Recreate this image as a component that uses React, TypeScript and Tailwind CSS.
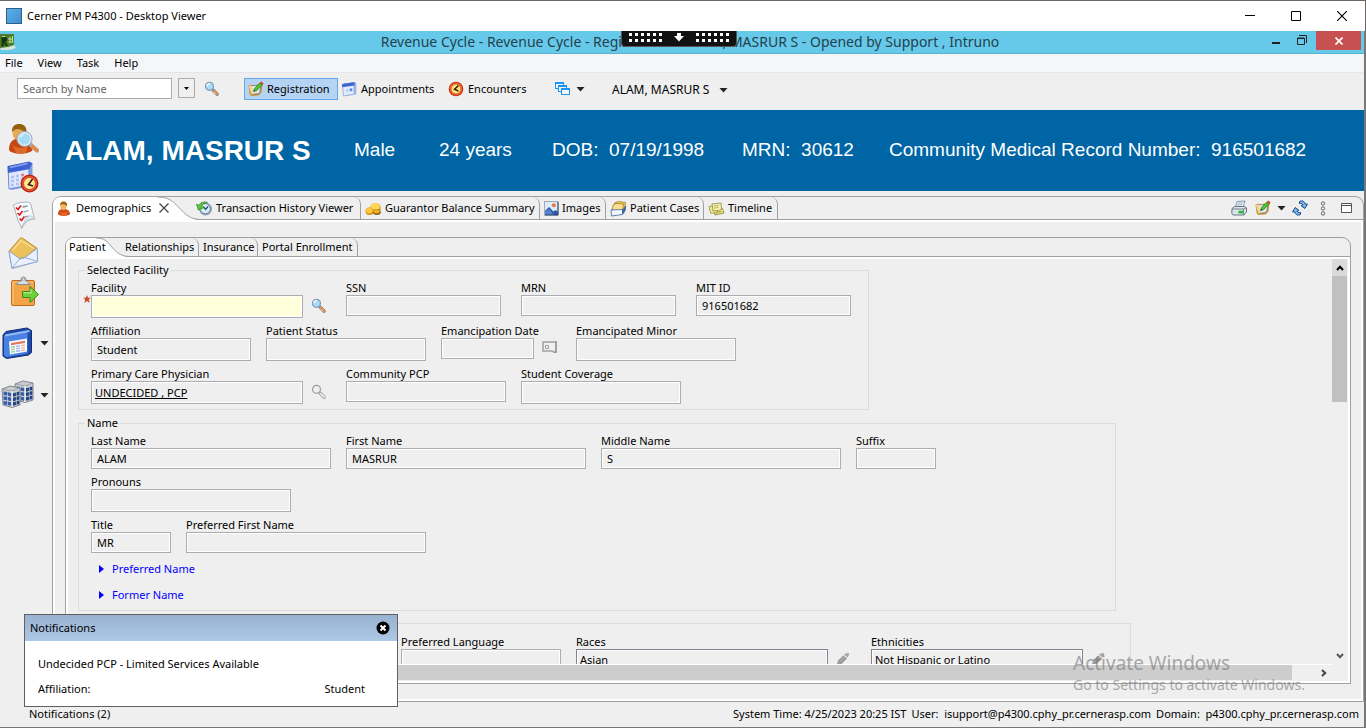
import React from "react";

/* ---------- small shared drawings ---------- */

function Caret({ className = "" }: { className?: string }) {
  return (
    <svg width="9" height="5" viewBox="0 0 9 5" className={className} aria-hidden="true">
      <path d="M0.5 0h8L4.5 4.6z" fill="#222" />
    </svg>
  );
}

function Magnifier({ muted = false }: { muted?: boolean }) {
  return (
    <svg width="16" height="16" viewBox="0 0 16 16" aria-hidden="true">
      <path d="M9 9l4.200 4.200" stroke={muted ? "#a0a0a0" : "#8a8f98"} strokeWidth="3.400" strokeLinecap="round" />
      <path d="M9.600 9.600l3.600 3.600" stroke={muted ? "#efefef" : "#f28a3c"} strokeWidth="1.800" strokeLinecap="round" />
      {!muted && <path d="M9.800 10.800l2.400 2.400" stroke="#ffe0b0" strokeWidth="0.8" />}
      <circle cx="5.500" cy="5.300" r="4" fill={muted ? "#efefef" : "#a9dbfb"} stroke={muted ? "#a0a0a0" : "#7d9cb8"} strokeWidth="1.200" />
      {!muted && <path d="M3 5.200a2.800 2.800 0 0 1 2.800-2.600" stroke="#fff" strokeWidth="1.400" fill="none" />}
    </svg>
  );
}

function EditPad() {
  return (
    <svg width="16" height="16" viewBox="0 0 16 16" className="shrink-0" aria-hidden="true">
      <path d="M.5 4.500l3-1 1 1 10-1.500-1 8.500-3 3-7.500.5L1.500 13z" fill="#c9963f" />
      <path d="M2.500 5l10.500-1-1.500 8.500-7.500.8z" fill="#dbe8fa" stroke="#8a7440" strokeWidth=".7" />
      <path d="M.8 5l2.600 8.500 2.400-.4L3.600 4.600z" fill="#f3d68a" />
      <path d="M5.500 10.500l1-3L12 1.800l2.300 2L8.600 9.700z" fill="#4fc22f" stroke="#2a7a1c" strokeWidth=".7" />
      <path d="M12 1.800L13.400.5l2.200 2-1.300 1.400z" fill="#e0392b" />
      <path d="M5.500 10.500l1-1.500.8.800z" fill="#222" />
    </svg>
  );
}

function CalendarSmall() {
  return (
    <svg width="16" height="16" viewBox="0 0 16 16" className="shrink-0" aria-hidden="true">
      <path d="M3 2.500L14 1l1.300 1v11.500L3.500 15z" fill="#9fb4e8" />
      <path d="M1.500 3.500L13 1.800v11.400L2.500 15z" fill="#e6edff" stroke="#8da5dd" strokeWidth=".8" />
      <path d="M1 3L13.500 1.200v3.400L1.300 6.200z" fill="#3c66d0" />
      <path d="M5 8.200l2.600-.3v2.600L5 10.800z" fill="#b9cbf3" />
      <path d="M8.700 7.600l2.600-.4v2.800l-2.600.4z" fill="#5f86e2" />
      <path d="M5 12l2.600-.3v1.500L5 13.500z" fill="#d5e0fa" />
    </svg>
  );
}

function ClockRed() {
  return (
    <svg width="16" height="16" viewBox="0 0 16 16" className="shrink-0" aria-hidden="true">
      <circle cx="8" cy="8" r="7.300" fill="#c8351c" />
      <circle cx="8" cy="8" r="6.200" fill="#f0672e" />
      <circle cx="8" cy="8" r="4.900" fill="#ffe27a" stroke="#b5351c" strokeWidth=".6" />
      <path d="M10.500 4.500L6.500 8.200l4 2" stroke="#3a1a08" strokeWidth="1.500" fill="none" />
    </svg>
  );
}

function Windows() {
  return (
    <svg width="15" height="14" viewBox="0 0 15 14" className="shrink-0" aria-hidden="true">
      {[[0.5, 0.5], [3.5, 3.5], [6.5, 6.5]].map(([x, y]) => (
        <g key={x}>
          <rect x={x} y={y} width="8" height="6" fill="#f4f8fc" stroke="#1a94ee" />
          <rect x={x} y={y} width="8" height="1.500" fill="#1a94ee" />
        </g>
      ))}
    </svg>
  );
}

function PersonSmall() {
  return (
    <svg width="14" height="16" viewBox="0 0 14 16" aria-hidden="true">
      <path d="M1 13c0-3 1.500-4.800 4-5h3c3 .2 5 2 5 5 0 2-12 2.600-12 0z" fill="#cf4a14" />
      <path d="M3 10c2 2 5 2.300 8 0l-2 5H5z" fill="#e4672a" />
      <ellipse cx="6.500" cy="5" rx="3.200" ry="4" fill="#f0b862" />
      <path d="M3.200 5C2.800 1.500 5 .4 7 .6c2.500.2 3.500 2 2.900 4.600C9 3.200 6 3.500 5 3c-.6.500-1.200 1-1.800 2z" fill="#9b6414" />
    </svg>
  );
}

function HistoryClock() {
  return (
    <svg width="17" height="16" viewBox="0 0 17 16" className="shrink-0" aria-hidden="true">
      <circle cx="9.500" cy="8" r="6.500" fill="#8fa3b3" />
      <circle cx="9.300" cy="7.700" r="5" fill="#d6effa" stroke="#60798c" strokeWidth=".8" />
      <path d="M7.500 5.500l2 3 2.600-3" stroke="#24485c" strokeWidth="1.300" fill="none" />
      <path d="M0.500 3.200l2.200 1C4.500 1.500 8 .2 11.500 1.500 8.500 1.700 6.500 3 5.500 5.500L8 6.700 2.300 9z" fill="#5cc540" stroke="#2f8a24" strokeWidth=".7" />
    </svg>
  );
}

function Coins() {
  return (
    <svg width="17" height="16" viewBox="0 0 17 16" className="shrink-0" aria-hidden="true">
      <ellipse cx="10.500" cy="7" rx="5.300" ry="4.800" fill="#e79c12" />
      <ellipse cx="10" cy="5.800" rx="4.600" ry="3.800" fill="#ffd75a" />
      <ellipse cx="4.600" cy="10.300" rx="4" ry="3.700" fill="#d98c0c" />
      <ellipse cx="4.400" cy="9.600" rx="3.300" ry="2.800" fill="#ffc93c" />
      <ellipse cx="11.800" cy="11" rx="4" ry="3" fill="#8f5e14" />
      <ellipse cx="11.500" cy="10.200" rx="3.200" ry="2" fill="#efb028" />
    </svg>
  );
}

function PictureIcon() {
  return (
    <svg width="15" height="15" viewBox="0 0 15 15" className="shrink-0" aria-hidden="true">
      <rect x=".5" y=".5" width="13.500" height="13.500" fill="#dceafd" stroke="#a3a8b3" />
      <path d="M1 14V10l4-4 4.500 4.500L11.500 9l2.500 2v3z" fill="#2d59a8" />
      <path d="M1 14v-3l4-3 5 6z" fill="#5484cf" />
      <circle cx="9.800" cy="4.200" r="2" fill="#f2793c" />
      <path d="M1 14h13V1" stroke="#28406f" fill="none" />
    </svg>
  );
}

function CaseBox() {
  return (
    <svg width="17" height="16" viewBox="0 0 17 16" className="shrink-0" aria-hidden="true">
      <path d="M1 9l3-4 11-1 1.300 2-2.300 7-12 2z" fill="#7ea0c8" />
      <path d="M4.500 2l4-1.500L15.500 1.500l-1 7H4z" fill="#f1c65a" stroke="#9a7424" strokeWidth=".7" />
      <path d="M3 4l3-1.500 7.500.5-1 6.500H2.500z" fill="#fbdf90" stroke="#9a7424" strokeWidth=".7" />
      <path d="M1 9l11.500-.5v5L1.500 15z" fill="#f4f8fd" stroke="#41669c" strokeWidth=".8" />
      <path d="M12.500 8.500l3.500-4-.5 5-3 4z" fill="#3f6397" />
    </svg>
  );
}

function Notes() {
  return (
    <svg width="17" height="16" viewBox="0 0 17 16" className="shrink-0" aria-hidden="true">
      <path d="M5 8.500l9.500-1 1.500 4.500-9 2z" fill="#e7df7c" stroke="#87813a" strokeWidth=".8" />
      <path d="M4 3l9-1 .5 6-3 2-6 .3z" fill="#faf5ae" stroke="#8d8740" strokeWidth=".8" />
      <path d="M1 5.500L4.500 5l.5 5 5-.4-1.500 2.200-6 .4z" fill="#efe88d" stroke="#8d8740" strokeWidth=".7" />
      <path d="M6 5l5-.5M6 7l4.500-.4M8 11.500l5.500-1" stroke="#a39c50" strokeWidth=".8" />
    </svg>
  );
}

function Printer() {
  return (
    <svg width="16" height="16" viewBox="0 0 16 16" aria-hidden="true">
      <path d="M4.500 7L6 1.500l8-.5-2 6.500z" fill="#f2f8fd" stroke="#7590a8" strokeWidth=".9" />
      <path d="M6.800 3.200l5-.3M6.200 5l5-.3" stroke="#7ba0bd" strokeWidth=".8" />
      <path d="M1 8.500L3.500 6.500h10l2 1.500v4L13 15H2L.8 13.500z" fill="#dce4e9" stroke="#5a6a75" strokeWidth=".9" />
      <path d="M1 9h11.500l2.800-1.300M12.500 9v5.500" stroke="#5a6a75" strokeWidth=".8" fill="none" />
      <rect x="7.500" y="10.800" width="4.300" height="2.600" fill="#12c020" />
    </svg>
  );
}

function Refresh() {
  return (
    <svg width="16" height="16" viewBox="0 0 16 16" aria-hidden="true" fill="#86b8ee" stroke="#12458c" strokeWidth="1" strokeLinejoin="round">
      <path d="M7.500 1.500C10 .2 12.500 1 13.300 4.200L15.400 4l-2.600 4.500L9 5.500l2-.5C10.500 3.400 9.400 3 7.500 3.600z" />
      <path d="M8.500 14.500C6 15.800 3.500 15 2.700 11.800L.6 12l2.600-4.500L7 10.500l-2 .5c.5 1.600 1.600 2 3.500 1.400z" />
    </svg>
  );
}

function Pencil() {
  return (
    <svg width="14" height="14" viewBox="0 0 14 14" aria-hidden="true">
      <path d="M.8 13L2 8.500 7.500 3.200l3.800 3L5.500 12z" fill="#9a9a9a" />
      <path d="M8 2.800L10 1.200 13 1l-.3 2.700-1.200 1.800z" fill="#a8a8a8" />
      <path d="M7.500 3.200l3.800 3" stroke="#efefef" strokeWidth=".8" />
      <path d="M3.500 9.800L8.500 5" stroke="#b9b9b9" strokeWidth=".9" />
    </svg>
  );
}

/* ---------- sidebar drawings ---------- */

function PersonSearch() {
  return (
    <svg width="32" height="32" viewBox="0 0 32 32" aria-hidden="true">
      <path d="M2 27c0-7 3-10.500 8-11.500h7c6 1 8 5 8.500 11.500C22 32 5 32 2 27z" fill="#c84611" />
      <path d="M5 21c4 5 11 5 16 1l-2 8H9z" fill="#dd6a2a" />
      <ellipse cx="12" cy="9.500" rx="6.500" ry="8" fill="#eaa952" />
      <path d="M5 9C4.500 2.500 9 .5 13 1c5 .5 7.500 4 6 10-1.500-4.500-6-4-9-5-2 .5-4 1.500-5 3z" fill="#93600f" />
      <path d="M24 22l6 5.500" stroke="#a2aab2" strokeWidth="4.400" strokeLinecap="round" />
      <path d="M25.500 23.500l4.300 4" stroke="#f58233" strokeWidth="2.800" strokeLinecap="round" />
      <circle cx="17.500" cy="16" r="6.600" fill="#a4daf5" stroke="#dfe7ee" strokeWidth="2" />
      <circle cx="17.500" cy="16" r="7.600" fill="none" stroke="#7e98ac" strokeWidth=".8" />
      <path d="M13 15c.5-3 3-4 5-3.800-2 1-3.200 2.300-5 3.800z" fill="#fff" />
    </svg>
  );
}

function CalendarClock() {
  return (
    <svg width="32" height="32" viewBox="0 0 32 32" aria-hidden="true">
      <path d="M1 6L22 1l3.500 2v22L4 29l-2-2z" fill="#7f9ce2" />
      <path d="M1 6L22 1.500V24L2 28z" fill="#dfe8ff" stroke="#6d8bd9" />
      <path d="M.6 5L22 .6l3.600 1.600-3.600 6L1 12z" fill="#3f62d2" />
      <path d="M3 6.500l17.500-4" stroke="#8aa6f0" strokeWidth="1.400" />
      {[0, 1, 2].map((r) => (
        <g key={r} fill="#afc3f2">
          <path d={`M4 ${15 + r * 4}l3-.6v2.600l-3 .6z`} />
          <path d={`M9 ${14 + r * 4}l3-.6v2.600l-3 .6z`} />
          <path d={`M14 ${13 + r * 4}l3-.6v2.600l-3 .6z`} fill={r === 0 ? "#ee7d7d" : "#afc3f2"} />
        </g>
      ))}
      <circle cx="22.500" cy="22.500" r="9" fill="#bd2410" />
      <circle cx="22.500" cy="22.500" r="7.500" fill="#ee5a34" />
      <circle cx="22.500" cy="22.500" r="6" fill="#ffe691" stroke="#bd2410" strokeWidth=".7" />
      <path d="M25.500 18l-4 5.500 4.500 1.500" stroke="#3b1c0c" strokeWidth="1.600" fill="none" />
    </svg>
  );
}

function Checklist() {
  return (
    <svg width="32" height="32" viewBox="0 0 32 32" aria-hidden="true">
      <path d="M6.500 6C10 4 14 3 20 3c2 0 3.500 1 4 3l3.500 14c-5 0-9 2-13 9.500-1-4-2-5-3.500-8z" fill="#f8fbfd" stroke="#a7b2bd" />
      <path d="M14.500 29.500c3-8 7-9.500 13-9.500-2-3-4-3.500-6-3-3 2-5 7-7 12.500z" fill="#dde8f0" stroke="#a7b2bd" strokeWidth=".6" />
      <path d="M15.500 8l5-1M16.500 13l5-1.500M18 18l3-1" stroke="#8494a3" strokeWidth="1.300" />
      <path d="M9 8.500l2 2 3-4M10.500 14l2 2 3-4M12.500 19.500l2 2 3-4" stroke="#e01d1d" strokeWidth="1.700" fill="none" />
    </svg>
  );
}

function Envelope() {
  return (
    <svg width="32" height="32" viewBox="0 0 32 32" aria-hidden="true">
      <path d="M2 14L15 4l15 7.500.6 13L5 31.500z" fill="#cdddf5" stroke="#8ea5c8" />
      <path d="M2.500 13.500L13 1.500c.8-.8 2-.8 3 0L29.500 11 18 21l-12 1z" fill="#ecc15c" stroke="#b98a2a" />
      <path d="M6 13L14 3.500l13 8" stroke="#f8df9d" strokeWidth="1.200" fill="none" />
      <path d="M2 14l11 8 5-1.500L30 11.500l.6 13L5 31z" fill="#e9f1fe" stroke="#8ea5c8" strokeWidth=".9" />
      <path d="M5 31l8-9.500 5-1 12.500 4" stroke="#8ea5c8" strokeWidth=".9" fill="none" />
    </svg>
  );
}

function ClipboardArrow() {
  return (
    <svg width="32" height="32" viewBox="0 0 32 32" aria-hidden="true">
      <rect x="4.500" y="5.500" width="23" height="25" rx="1.500" fill="#f3a348" stroke="#c16c1c" />
      <path d="M6 29V7h20" stroke="#ffca85" fill="none" />
      <path d="M9.500 9.500L12 6h2.500a2.500 2.500 0 1 1 4 0H20l3 3.500z" fill="#dcdfe3" stroke="#868b92" />
      <circle cx="16.500" cy="4" r="1.300" fill="#efefef" stroke="#868b92" strokeWidth=".7" />
      <path d="M15.500 16.500h7.500v-5l8.500 8-8.500 8v-5h-7.500z" fill="#6fd03c" stroke="#368c17" />
      <path d="M16.500 17.800h7.500v-3.500" stroke="#c2f2a0" fill="none" />
    </svg>
  );
}

function ScheduleBook() {
  return (
    <svg width="32" height="32" viewBox="0 0 32 32" aria-hidden="true">
      <path d="M1 8L4 4.500 25 1l4.500 2.500V25.500l-3 2.500L4.500 31.500 1 29z" fill="#1d49a8" stroke="#112d74" />
      <path d="M2 9L25.500 5V26.500L4.500 30.300 2 28z" fill="#4a82e2" />
      <path d="M3 8.500L27.500 4" stroke="#96bcf8" strokeWidth="1.800" />
      <path d="M7 14.500L25 11.500v13L8 27.500z" fill="#f7fbff" />
      <path d="M9 16l14-2.300v2.300L9 18.300z" fill="#e2775c" />
      <path d="M9 19.500l4-.6v6.300l-4 .6z" fill="#9ad497" />
      <path d="M14 18.700l4-.6v6.300l-4 .6z" fill="#a9b9ef" />
      <path d="M19 17.900l4-.6v6.300l-4 .6z" fill="#f1b8a6" />
      <path d="M8 21.700l16-2.600M8 24l16-2.600" stroke="#fff" strokeWidth=".9" />
    </svg>
  );
}

function Buildings() {
  const towers = [
    { x: 14, y: 2, k: "back" },
    { x: 1, y: 7, k: "front" },
  ];
  return (
    <svg width="33" height="32" viewBox="0 0 33 32" aria-hidden="true">
      {towers.map(({ x, y, k }) => (
        <g key={k} transform={`translate(${x} ${y})`}>
          <path d="M0 3L8 0l10 2v17l-8 2.500L1 19z" fill="#c9ccd0" stroke="#777d84" strokeWidth=".9" />
          <path d="M0 3l10 2 8-3" fill="none" stroke="#8f959b" strokeWidth=".8" />
          <path d="M10 5v16" stroke="#f8f8f8" strokeWidth="1.200" />
          {[0, 1, 2].map((r) => (
            <g key={r} fill="#355fa8">
              <path d={`M1.500 ${5.5 + r * 4.7}l3.600.6v3.500l-3.600-.6z`} />
              <path d={`M5.800 ${6.3 + r * 4.7}l3.400.6v3.500l-3.400-.6z`} />
              <path d={`M11 ${7.2 + r * 4.5}l2.900-.7v3.500l-2.900.7z`} fill="#1f4284" />
              <path d={`M14.600 ${6.2 + r * 4.5}l2.700-.7v3.500l-2.700.7z`} fill="#1f4284" />
            </g>
          ))}
        </g>
      ))}
    </svg>
  );
}

/* ---------- form parts ---------- */

type FieldProps = {
  id: string;
  label: string;
  value?: string;
  width: string;
  tall?: boolean;
  required?: boolean;
  tone?: string;
  text?: string;
};

function Field({ id, label, value = "", width, tall = false, required = false, tone = "border-[#abadb3]", text = "pl-[5px]" }: FieldProps) {
  return (
    <div className={`relative shrink-0 ${width}`}>
      <label htmlFor={id} className="block h-[14px] whitespace-nowrap leading-[14px]">
        {label}
      </label>
      {required && (
        <svg className="absolute -left-2 top-[14px]" width="8" height="8" viewBox="0 0 8 8" aria-hidden="true">
          <path d="M4 0l1.100 2.700H8L5.800 4.600 6.600 8 4 6 1.400 8l.8-3.400L0 2.700h2.900z" fill="#cc4a2a" />
        </svg>
      )}
      <input
        id={id}
        defaultValue={value}
        readOnly={!required}
        className={`block w-full border outline-none ${tone} ${tall ? "h-[23px]" : "h-[21px]"} ${text} shadow-[inset_0_0_0_1px_white] ${required ? "bg-[#ffffdc]" : "bg-[#efefef]"}`}
      />
    </div>
  );
}

function FieldIcon({ label, children, width }: { label: string; children: React.ReactNode; width: string }) {
  return (
    <div className={`flex shrink-0 items-end pb-1 pl-2 ${width}`}>
      <button type="button" aria-label={label}>
        {children}
      </button>
    </div>
  );
}

function Group({ title, width, children }: { title: string; width: string; children: React.ReactNode }) {
  return (
    <fieldset className={`border border-[#dcdcdc] pl-3 pt-[3px] ${width}`}>
      <legend className="-ml-1.5 h-4 px-0.5 leading-4">{title}</legend>
      <div className="flex flex-col gap-1.5">{children}</div>
    </fieldset>
  );
}

/* ---------- tabs ---------- */

function Tab({ icon, label, width }: { icon?: React.ReactNode; label: string; width: string }) {
  return (
    <button
      type="button"
      role="tab"
      aria-selected="false"
      className={`relative flex h-full shrink-0 items-center gap-[3px] whitespace-nowrap rounded-tr-[7px] border-r border-[#a0a0a0] pl-1 pt-px ${width}`}
    >
      {icon}
      {label}
    </button>
  );
}

function Disclosure({ label }: { label: string }) {
  return (
    <button type="button" className="flex h-5 items-center gap-2 pl-2 text-[#0000ff]">
      <svg width="5" height="8" viewBox="0 0 5 8" aria-hidden="true">
        <path d="M0 0l5 4-5 4z" fill="#0000ff" />
      </svg>
      {label}
    </button>
  );
}

const shortcuts = [
  { name: "Person search", icon: <PersonSearch /> },
  { name: "Scheduling", icon: <CalendarClock /> },
  { name: "Work list", icon: <Checklist /> },
  { name: "Messages", icon: <Envelope /> },
  { name: "Clipboard", icon: <ClipboardArrow /> },
];

export default function App() {
  return (
    <div className="relative flex h-screen flex-col overflow-hidden border-t border-[#6f6464] bg-[#efefef] font-['Noto_Sans','Open_Sans',sans-serif] text-[11px] text-black">
      {/* viewer title bar */}
      <header className="flex h-[30px] shrink-0 items-center border-r border-[#6f6464] bg-white pl-1.5">
        <span className="mr-[5px] h-4 w-4 border border-[#2b5f8c] bg-gradient-to-br from-[#5fb0ea] to-[#3c8fd0]" />
        <span>Cerner PM P4300 - Desktop Viewer</span>
        <div className="ml-auto flex items-center gap-9 pr-[18px]">
          <button type="button" aria-label="Minimize">
            <svg width="10" height="10" viewBox="0 0 10 10"><path d="M0 4.500h10" stroke="#000" /></svg>
          </button>
          <button type="button" aria-label="Maximize">
            <svg width="10" height="10" viewBox="0 0 10 10"><path d="M.5.5h9v9h-9z" fill="none" stroke="#000" /></svg>
          </button>
          <button type="button" aria-label="Close">
            <svg width="10" height="10" viewBox="0 0 10 10"><path d="M0 0l10 10M10 0L0 10" stroke="#000" strokeWidth="1.200" /></svg>
          </button>
        </div>
      </header>

      <div className="flex min-h-0 flex-1 flex-col border-b border-r-2 border-[#777]">
        {/* application title bar */}
        <div className="relative flex h-[23px] shrink-0 items-center border-b border-[#58b3d1] bg-[#66c9ea]">
          <svg width="16" height="16" viewBox="0 0 16 16" className="shrink-0" aria-hidden="true">
            <path d="M0 12l14-1 2 3-6 2H1z" fill="#d9e2dc" />
            <path d="M0 0h14v11L8 13l-8 1z" fill="#4d7d28" />
            <path d="M1.500 12.500V3h3.500c3 0 3 4 .5 4.500L8 12H5.500L3.800 8v4.500z" fill="#17360c" />
            <path d="M2 2.500h3M8 5h5M8.500 8h5M10 3v6M12.500 2v6" stroke="#c3e29a" strokeWidth="1" />
          </svg>
          <h1 className="flex-1 text-center text-[14px] leading-5 text-[#24414c]">
            Revenue Cycle - Revenue Cycle - Registration - ALAM, MASRUR S - Opened by Support , Intruno
          </h1>
          <div className="absolute right-[3px] top-0 flex items-start">
            <button type="button" aria-label="Minimize window" className="mr-[17px] mt-[11px] h-[2px] w-2 bg-[#222]" />
            <button type="button" aria-label="Restore window" className="mr-[9px] mt-1">
              <svg width="10" height="10" viewBox="0 0 10 10"><path d="M2 .5h7.500V8M.5 3h7v6.500h-7zM.5 3.500h7" fill="none" stroke="#222" /></svg>
            </button>
            <button type="button" aria-label="Close window" className="flex h-[19px] w-[45px] items-center justify-center bg-[#c75050]">
              <svg width="8" height="8" viewBox="0 0 8 8"><path d="M.5.5l7 7M7.500.5l-7 7" stroke="#fff" strokeWidth="1.700" /></svg>
            </button>
          </div>
          <button
            type="button"
            aria-label="Viewer toolbar"
            className="absolute left-1/2 top-0 flex h-4 w-[116px] -translate-x-[61px] items-start justify-center gap-3 rounded-b-[4px] border border-t-0 border-[#555] bg-[#111] pt-0.5"
          >
            <svg width="33" height="9" viewBox="0 0 33 9"><path d="M0 1.500h33M0 7.500h33" stroke="#fff" strokeWidth="3" strokeDasharray="3 3" /></svg>
            <svg width="10" height="9" viewBox="0 0 10 9"><path d="M3 0h4v3h3L5 8.500 0 3h3z" fill="#fff" /></svg>
            <svg width="33" height="9" viewBox="0 0 33 9"><path d="M0 1.500h33M0 7.500h33" stroke="#fff" strokeWidth="3" strokeDasharray="3 3" /></svg>
          </button>
        </div>

        {/* menu */}
        <nav className="flex h-[19px] shrink-0 items-center gap-[15px] border-b border-[#e6e6e8] bg-[#f5f6f8] pl-[5px] pt-px">
          <button type="button">File</button>
          <button type="button">View</button>
          <button type="button">Task</button>
          <button type="button">Help</button>
        </nav>

        {/* toolbar */}
        <div className="flex h-[37px] shrink-0 items-start pl-[17px] pt-[5px]">
          <input
            aria-label="Search by Name"
            placeholder="Search by Name"
            className="h-[21px] w-[155px] border border-[#abadb3] bg-white pl-[5px] outline-none placeholder:text-[#666]"
          />
          <button type="button" aria-label="Search options" className="ml-1.5 flex h-5 w-[17px] items-center justify-center border border-[#acacac] bg-[#efefef]">
            <svg width="5" height="3" viewBox="0 0 5 3"><path d="M0 0h5L2.500 3z" fill="#000" /></svg>
          </button>
          <button type="button" aria-label="Search" className="ml-[9px] mt-[3px]">
            <Magnifier />
          </button>
          <button type="button" className="ml-6 flex h-[22px] w-[94px] shrink-0 items-center gap-[3px] whitespace-nowrap border border-[#66a7e8] bg-[#b5d3f2] pl-[3px]">
            <EditPad /> Registration
          </button>
          <button type="button" className="ml-[3px] flex h-[22px] w-[107px] shrink-0 items-center gap-1 whitespace-nowrap">
            <CalendarSmall /> Appointments
          </button>
          <button type="button" className="flex h-[22px] w-[107px] shrink-0 items-center gap-1 whitespace-nowrap">
            <ClockRed /> Encounters
          </button>
          <button type="button" aria-label="Open windows" className="flex h-[22px] w-[57px] shrink-0 items-center gap-1.5">
            <Windows /> <Caret />
          </button>
          <button type="button" className="flex h-6 items-center gap-[10px] whitespace-nowrap text-[12px]">
            ALAM, MASRUR S <Caret />
          </button>
        </div>

        {/* sidebar and content */}
        <div className="flex min-h-0 flex-1">
          <aside className="flex w-[52px] shrink-0 flex-col pt-[13px]">
            <div className="flex flex-col gap-1.5 pl-[7px]">
              {shortcuts.map((s) => (
                <button key={s.name} type="button" aria-label={s.name} className="h-8 w-8">
                  {s.icon}
                </button>
              ))}
            </div>
            <button type="button" aria-label="Schedule book" className="mt-5 flex items-center gap-1.5 pl-0.5">
              <ScheduleBook /> <Caret />
            </button>
            <button type="button" aria-label="Facilities" className="mt-5 flex items-center gap-1.5 pl-px">
              <Buildings /> <Caret />
            </button>
          </aside>

          <main className="flex min-w-0 flex-1 flex-col">
            <section className="flex h-[81px] shrink-0 items-center whitespace-nowrap bg-[#0065a4] pl-[13px] font-['Liberation_Sans',Arial,sans-serif] text-[19px] text-white">
              <h2 className="w-[289px] text-[28px] font-bold">ALAM, MASRUR S</h2>
              <span className="w-[85px]">Male</span>
              <span className="w-[113px]">24 years</span>
              <span className="w-[190px] whitespace-pre">DOB:  07/19/1998</span>
              <span className="w-[147px] whitespace-pre">MRN:  30612</span>
              <span className="whitespace-pre">Community Medical Record Number:  916501682</span>
            </section>

            {/* outer tab folder */}
            <section className="mt-[5px] flex min-h-0 flex-1 flex-col overflow-hidden rounded-t-[9px] border border-[#a0a0a0]">
              <div role="tablist" className="relative flex h-[23px] shrink-0 border-b border-[#a0a0a0]">
                <div className="relative flex w-[139px] shrink-0 items-center">
                  <svg className="absolute left-0 top-0" width="148" height="23" viewBox="0 0 148 23" aria-hidden="true">
                    <path d="M0 0h104c10 0 15 3 21 9.500 8 9 13 13.500 23 13.500H0z" fill="#fff" />
                    <path d="M104 0c10 0 15 3 21 9.500 8 9 13 13 23 13" fill="none" stroke="#a0a0a0" />
                  </svg>
                  <button type="button" role="tab" aria-selected="true" className="relative flex items-center gap-[5px] pl-1 pt-px">
                    <PersonSmall /> Demographics
                  </button>
                  <button type="button" aria-label="Close Demographics" className="relative ml-2">
                    <svg width="10" height="10" viewBox="0 0 10 10"><path d="M.5.5l9 9M9.500.5l-9 9" stroke="#444" strokeWidth="1.200" /></svg>
                  </button>
                </div>
                <Tab icon={<HistoryClock />} label="Transaction History Viewer" width="w-[169px]" />
                <Tab icon={<Coins />} label="Guarantor Balance Summary" width="w-[179px]" />
                <Tab icon={<PictureIcon />} label="Images" width="w-[66px]" />
                <Tab icon={<CaseBox />} label="Patient Cases" width="w-[98px]" />
                <Tab icon={<Notes />} label="Timeline" width="w-[74px]" />
                <div className="ml-auto flex items-center pr-[11px]">
                  <button type="button" aria-label="Print"><Printer /></button>
                  <button type="button" aria-label="Modify" className="ml-2 flex items-center gap-1.5">
                    <EditPad /> <Caret />
                  </button>
                  <button type="button" aria-label="Refresh" className="ml-1.5"><Refresh /></button>
                  <button type="button" aria-label="More" className="ml-3">
                    <svg width="6" height="15" viewBox="0 0 6 15"><g fill="none" stroke="#666"><circle cx="3" cy="2.500" r="1.700" /><circle cx="3" cy="7.500" r="1.700" /><circle cx="3" cy="12.500" r="1.700" /></g></svg>
                  </button>
                  <button type="button" aria-label="Maximize view" className="ml-[15px]">
                    <svg width="11" height="11" viewBox="0 0 11 11"><path d="M.5.5h10v9H.5zM.5 2.500h10" fill="#fff" stroke="#555" /></svg>
                  </button>
                </div>
              </div>

              <div className="flex min-h-0 flex-1 flex-col border-2 border-white px-2.5 py-[15px]">
                {/* inner tab folder */}
                <div className="flex min-h-0 flex-1 flex-col overflow-hidden rounded-t-[9px] border border-[#a0a0a0]">
                  <div role="tablist" className="relative flex h-[19px] shrink-0 border-b border-[#a0a0a0]">
                    <div className="relative flex w-[55px] shrink-0 items-center">
                      <svg className="absolute left-0 top-0" width="64" height="19" viewBox="0 0 64 19" aria-hidden="true">
                        <path d="M0 0h30c8 0 11 3 15 8 6 7.500 11 11 19 11H0z" fill="#fff" />
                        <path d="M30 0c8 0 11 3 15 8 6 7.500 11 10.500 19 10.500" fill="none" stroke="#a0a0a0" />
                      </svg>
                      <button type="button" role="tab" aria-selected="true" className="relative pl-[3px] pt-px">Patient</button>
                    </div>
                    <Tab label="Relationships" width="w-[78px]" />
                    <Tab label="Insurance" width="w-[59px]" />
                    <Tab label="Portal Enrollment" width="w-[100px]" />
                  </div>

                  <div className="flex min-h-0 flex-1 flex-col border-2 border-white">
                    <div className="flex min-h-0 flex-1">
                      <form className="flex min-w-0 flex-1 flex-col overflow-hidden pl-2.5 pt-[3px]">
                        <Group title="Selected Facility" width="w-[791px] shrink-0 pb-[5px]">
                          <div className="flex">
                            <Field id="facility" label="Facility" width="w-[212px]" tall required />
                            <FieldIcon label="Find facility" width="w-[43px]"><Magnifier /></FieldIcon>
                            <div className="flex gap-5">
                              <Field id="ssn" label="SSN" width="w-[155px]" />
                              <Field id="mrn" label="MRN" width="w-[155px]" />
                              <Field id="mit" label="MIT ID" value="916501682" width="w-[155px]" />
                            </div>
                          </div>
                          <div className="flex">
                            <div className="flex gap-[15px]">
                              <Field id="affiliation" label="Affiliation" value="Student" width="w-[160px]" tall />
                              <Field id="status" label="Patient Status" width="w-[160px]" tall />
                              <Field id="emdate" label="Emancipation Date" width="w-[93px]" />
                            </div>
                            <FieldIcon label="Pick date" width="w-[42px]">
                              <svg className="mb-1" width="15" height="12" viewBox="0 0 15 12"><path d="M13 1H1v9h10" fill="none" stroke="#a0a0a0" strokeWidth="1.500" /><path d="M14 0v11h-3" fill="none" stroke="#a0a0a0" strokeWidth="2" /><path d="M3.500 4.500h3v3h-3z" fill="none" stroke="#a0a0a0" /></svg>
                            </FieldIcon>
                            <Field id="minor" label="Emancipated Minor" width="w-[160px]" tall />
                          </div>
                          <div className="flex">
                            <Field id="pcp" label="Primary Care Physician" value="UNDECIDED , PCP" width="w-[212px]" tall text="pl-[3px] underline" />
                            <FieldIcon label="Find physician" width="w-[43px]"><Magnifier muted /></FieldIcon>
                            <div className="flex gap-[15px]">
                              <Field id="cpcp" label="Community PCP" width="w-[160px]" />
                              <Field id="coverage" label="Student Coverage" width="w-[160px]" tall />
                            </div>
                          </div>
                        </Group>

                        <Group title="Name" width="mt-[5px] w-[1038px] shrink-0 pb-[5px]">
                          <div className="flex gap-[15px]">
                            <Field id="last" label="Last Name" value="ALAM" width="w-[240px]" />
                            <Field id="first" label="First Name" value="MASRUR" width="w-[240px]" />
                            <Field id="middle" label="Middle Name" value="S" width="w-[240px]" />
                            <Field id="suffix" label="Suffix" width="w-[80px]" />
                          </div>
                          <Field id="pronouns" label="Pronouns" width="w-[200px]" tall />
                          <div className="flex gap-[15px]">
                            <Field id="title" label="Title" value="MR" width="w-[80px]" />
                            <Field id="preffirst" label="Preferred First Name" width="w-[240px]" />
                          </div>
                          <Disclosure label="Preferred Name" />
                          <Disclosure label="Former Name" />
                        </Group>

                        <div className="mt-3 flex w-[1053px] shrink-0 border border-[#dcdcdc] pb-2 pl-[322px] pt-[11px]">
                          <Field id="language" label="Preferred Language" width="w-[160px]" />
                          <div className="w-[15px]" />
                          <Field id="races" label="Races" value="Asian" width="w-[252px]" tone="border-[#80848e]" text="pl-[3px]" />
                          <FieldIcon label="Edit races" width="w-[43px]"><Pencil /></FieldIcon>
                          <Field id="ethnicities" label="Ethnicities" value="Not Hispanic or Latino" width="w-[212px]" tone="border-[#80848e]" text="pl-[3px]" />
                          <FieldIcon label="Edit ethnicities" width="w-[43px]"><Pencil /></FieldIcon>
                        </div>
                      </form>

                      {/* vertical scroll bar */}
                      <div className="mr-px flex w-[15px] shrink-0 flex-col" aria-hidden="true">
                        <div className="flex h-[17px] items-center justify-center bg-[#dadada]">
                          <svg width="8" height="6" viewBox="0 0 8 6"><path d="M1 5l3-3.200L7 5" fill="none" stroke="#000" strokeWidth="2" /></svg>
                        </div>
                        <div className="h-[126px] bg-[#c0c0c0]" />
                        <div className="mt-auto flex h-[17px] items-center justify-center">
                          <svg width="8" height="6" viewBox="0 0 8 6"><path d="M1 1l3 3.200L7 1" fill="none" stroke="#555" strokeWidth="2" /></svg>
                        </div>
                      </div>
                    </div>

                    {/* horizontal scroll bar */}
                    <div className="mb-px mr-4 flex h-4 shrink-0 border-t border-white" aria-hidden="true">
                      <div className="ml-[17px] flex-1 bg-[#cdcdcd]" />
                      <div className="w-[23px]" />
                      <div className="flex w-[17px] items-center justify-center">
                        <svg width="6" height="8" viewBox="0 0 6 8"><path d="M1 1l3.200 3L1 7" fill="none" stroke="#444" strokeWidth="2" /></svg>
                      </div>
                    </div>
                  </div>
                </div>
              </div>
            </section>
          </main>
        </div>

        {/* status bar */}
        <footer className="flex h-[25px] shrink-0 items-center whitespace-nowrap pl-[29px] pr-[5px]">
          <button type="button">Notifications (2)</button>
          <div className="ml-auto flex gap-[5px]">
            <span>System Time: 4/25/2023 20:25 IST</span>
            <span className="whitespace-pre">User:  isupport@p4300.cphy_pr.cernerasp.com</span>
            <span className="whitespace-pre">Domain:  p4300.cphy_pr.cernerasp.com</span>
          </div>
        </footer>
      </div>

      {/* activation overlay */}
      <div className="pointer-events-none absolute bottom-[33px] right-[57px] w-[236px] whitespace-nowrap text-[#777] opacity-60">
        <p className="text-[19px] leading-6">Activate Windows</p>
        <p className="text-[14px] leading-5">Go to Settings to activate Windows.</p>
      </div>

      {/* notification popup */}
      <section className="absolute bottom-[21px] left-6 w-[374px] border border-[#606060] bg-white">
        <header className="flex h-[26px] items-center justify-between bg-gradient-to-b from-[#98b2d0] to-[#adc8e6] pl-[5px] pr-[7px]">
          <h3>Notifications</h3>
          <button type="button" aria-label="Dismiss notifications">
            <svg width="14" height="14" viewBox="0 0 14 14"><circle cx="7" cy="7" r="6.500" fill="#000" /><path d="M4.500 4.500l5 5M9.500 4.500l-5 5" stroke="#fff" strokeWidth="2" /></svg>
          </button>
        </header>
        <div className="flex flex-col gap-[9px] pb-[9px] pl-[13px] pr-8 pt-[15px]">
          <p className="leading-4">Undecided PCP - Limited Services Available</p>
          <p className="flex justify-between leading-4"><span>Affiliation:</span><span>Student</span></p>
        </div>
      </section>
    </div>
  );
}
